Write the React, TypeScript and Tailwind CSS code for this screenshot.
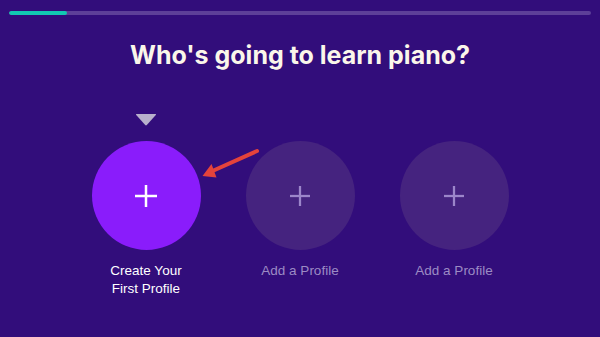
import React from "react";

function Plus({ color, size = 22, stroke = 2.5 }: { color: string; size?: number; stroke?: number }) {
  return (
    <svg width={size} height={size} viewBox="0 0 22 22">
      <line x1="11" y1="0" x2="11" y2="22" stroke={color} strokeWidth={stroke} />
      <line x1="0" y1="11" x2="22" y2="11" stroke={color} strokeWidth={stroke} />
    </svg>
  );
}

function Column({ active, label }: { active?: boolean; label: React.ReactNode }) {
  return (
    <div className="flex w-[109px] flex-col items-center">
      <div className="flex h-[12px] items-start justify-center">
        {active && (
          <svg width="22" height="13" viewBox="0 0 22 13">
            <path d="M1.5 1 L20.5 1 Q21.5 1 20.8 2 L11.8 12 Q11 12.8 10.2 12 L1.2 2 Q0.5 1 1.5 1 Z" fill="#b8b0cc" />
          </svg>
        )}
      </div>
      <div
        className={
          active
            ? "mt-[16px] flex h-[109px] w-[109px] items-center justify-center rounded-full bg-[#8a1cfb]"
            : "mt-[16px] flex h-[109px] w-[109px] items-center justify-center rounded-full bg-[#45237f]"
        }
      >
        {active ? <Plus color="#ffffff" size={22} stroke={2.5} /> : <Plus color="#9c86ca" size={20} stroke={2.5} />}
      </div>
      <div
        className={
          active
            ? "mt-[12px] text-center text-[13.5px] leading-[18px] text-white whitespace-nowrap"
            : "mt-[12px] text-center text-[13.5px] leading-[18px] text-[#9c8bc4] whitespace-nowrap"
        }
        style={{ fontFamily: '"Liberation Sans", Arial, sans-serif' }}
      >
        {label}
      </div>
    </div>
  );
}

export default function App() {
  return (
    <div className="relative h-[337px] w-[600px] overflow-hidden bg-[#320d7b]">
      <div className="px-[9px] pt-[11px]">
        <div className="h-[4px] w-full overflow-hidden rounded-full bg-[#5d3f98]">
          <div className="h-full w-[58px] rounded-full bg-[#12c9b2]" />
        </div>
      </div>
      <h1
        className="mt-[24px] text-center text-[25px] font-bold leading-[32px] text-[#fbf6ea]"
        style={{ fontFamily: 'Inter, "Open Sans", sans-serif' }}
      >
        Who's going to learn piano?
      </h1>
      <div className="mt-[42px] flex justify-center gap-[45px]">
        <Column
          active
          label={
            <>
              Create Your
              <br />
              First Profile
            </>
          }
        />
        <Column label="Add a Profile" />
        <Column label="Add a Profile" />
      </div>
      <svg className="absolute left-0 top-0" width="600" height="337" viewBox="0 0 600 337">
        <line x1="257" y1="151" x2="208" y2="173" stroke="#e4433b" strokeWidth="4" strokeLinecap="round" />
        <path d="M202.5 176 L211.5 164 L216.5 177.5 Z" fill="#e4433b" />
      </svg>
    </div>
  );
}
